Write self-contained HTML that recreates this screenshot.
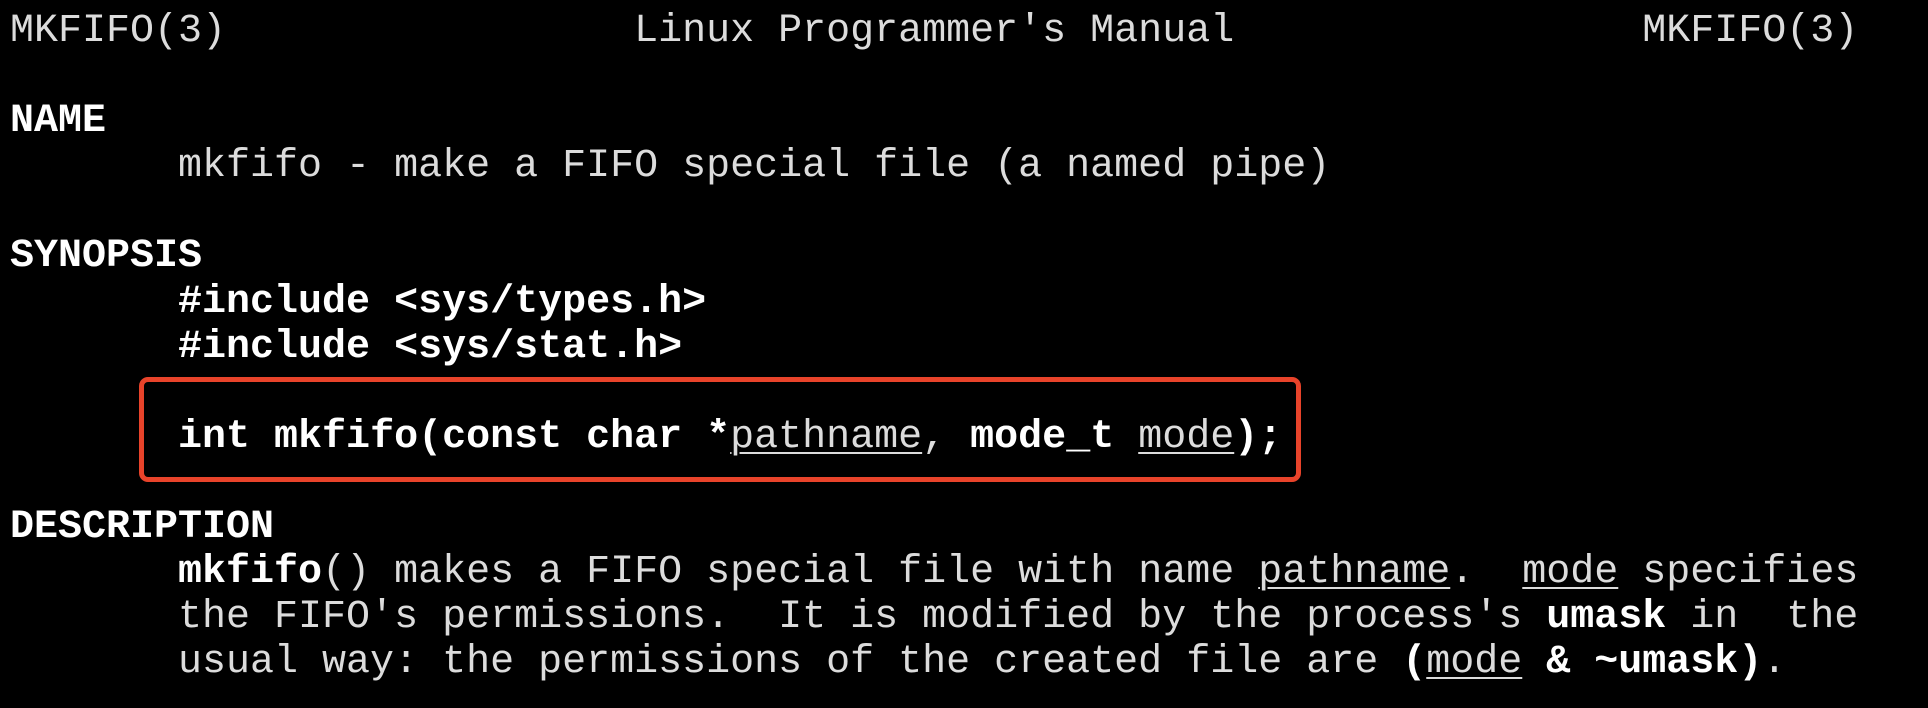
<!DOCTYPE html>
<html><head><meta charset="utf-8"><style>
html,body{margin:0;padding:0;background:#000;width:1928px;height:708px;overflow:hidden}
pre{position:absolute;left:10px;top:9px;margin:0;font-family:"Liberation Mono","DejaVu Sans Mono",monospace;font-size:40px;line-height:45.1px;color:#dcdcdc;white-space:pre}
b{color:#fff;font-weight:bold}
u{text-decoration:underline;text-underline-offset:5px;text-decoration-thickness:2px}
.box{position:absolute;left:139px;top:377px;width:1152px;height:95px;border:5px solid #e8432a;border-radius:9px}
</style></head><body>
<pre>MKFIFO(3)                 Linux Programmer's Manual                 MKFIFO(3)

<b>NAME</b>
       mkfifo - make a FIFO special file (a named pipe)

<b>SYNOPSIS</b>
       <b>#include &lt;sys/types.h&gt;</b>
       <b>#include &lt;sys/stat.h&gt;</b>

       <b>int mkfifo(const char *</b><u>pathname</u>, <b>mode_t</b> <u>mode</u><b>);</b>

<b>DESCRIPTION</b>
       <b>mkfifo</b>() makes a FIFO special file with name <u>pathname</u>.  <u>mode</u> specifies
       the FIFO's permissions.  It is modified by the process's <b>umask</b> in  the
       usual way: the permissions of the created file are <b>(</b><u>mode</u> <b>&amp; ~umask)</b>.</pre>
<div class="box"></div>
</body></html>
